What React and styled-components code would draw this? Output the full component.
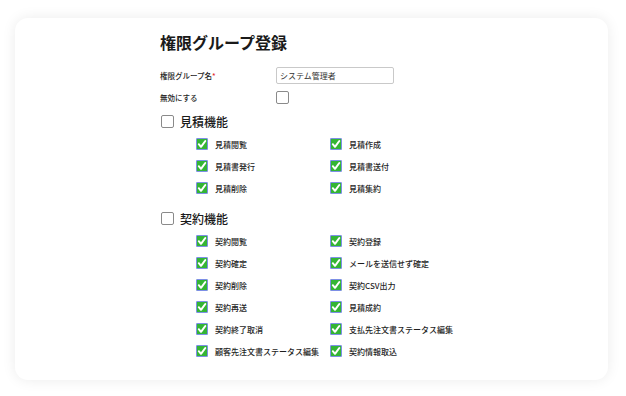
import styled, { createGlobalStyle } from "styled-components";

const GlobalStyle = createGlobalStyle`
  body {
    margin: 0;
    background: #ffffff;
    font-family: "Noto Sans CJK JP", "Noto Sans", sans-serif;
    color: #222;
  }
`;

const estimateItems = ["見積閲覧", "見積作成", "見積書発行", "見積書送付", "見積削除", "見積集約"];

const contractItems = [
  "契約閲覧",
  "契約登録",
  "契約確定",
  "メールを送信せず確定",
  "契約削除",
  "契約CSV出力",
  "契約再送",
  "見積成約",
  "契約終了取消",
  "支払先注文書ステータス編集",
  "顧客先注文書ステータス編集",
  "契約情報取込",
];

const CheckedBox = () => (
  <CheckMark>
    <svg width="10" height="10" viewBox="0 0 10 10">
      <path d="M1.8 5.2 L4 7.8 L8.3 2" fill="none" stroke="#fff" strokeWidth="2" strokeLinecap="round" strokeLinejoin="round" />
    </svg>
  </CheckMark>
);

const Section = ({ title, items }) => (
  <>
    <SectionHeader>
      <EmptyBox />
      <SectionTitle>{title}</SectionTitle>
    </SectionHeader>
    <ItemGrid>
      {items.map((label) => (
        <Item key={label}>
          <CheckedBox />
          <ItemLabel>{label}</ItemLabel>
        </Item>
      ))}
    </ItemGrid>
  </>
);

const App = () => {
  return (
    <>
      <GlobalStyle />
      <Page>
        <Card>
          <Title>権限グループ登録</Title>
          <FormRow>
            <Label>
              権限グループ名<Required>*</Required>
            </Label>
            <TextInput defaultValue="システム管理者" readOnly />
          </FormRow>
          <FormRow>
            <Label>無効にする</Label>
            <EmptyBox />
          </FormRow>
          <Section title="見積機能" items={estimateItems} />
          <SectionSpacer />
          <Section title="契約機能" items={contractItems} />
        </Card>
      </Page>
    </>
  );
};

export default App;

const Page = styled.div`
  width: 626px;
  height: 396px;
  padding: 18px 18px 0 15px;
  box-sizing: border-box;
`;

const Card = styled.div`
  width: 593px;
  height: 362px;
  box-sizing: border-box;
  background: #fff;
  border-radius: 13px;
  box-shadow: 0 0 14px rgba(0, 0, 0, 0.08);
  padding: 14px 0 0 145px;
  display: flex;
  flex-direction: column;
`;

const Title = styled.h1`
  margin: 0 0 12px;
  font-size: 16px;
  line-height: 20px;
  font-weight: 700;
  color: #1a1a1a;
`;

const FormRow = styled.div`
  display: flex;
  align-items: center;
  height: 22px;
`;

const Label = styled.div`
  width: 116px;
  font-size: 7.5px;
  font-weight: 500;
  color: #1e1e1e;
`;

const Required = styled.span`
  color: #e02a2a;
`;

const TextInput = styled.input`
  width: 118px;
  height: 17px;
  box-sizing: border-box;
  border: 1px solid #c9c9c9;
  border-radius: 2px;
  padding: 0 3px;
  font-family: "Noto Sans CJK JP", "Noto Sans", sans-serif;
  font-size: 8px;
  color: #333;
  outline: none;
`;

const EmptyBox = styled.span`
  display: inline-block;
  width: 13px;
  height: 13px;
  box-sizing: border-box;
  border: 1px solid #8a8a8a;
  border-radius: 2px;
  background: #fff;
`;

const SectionHeader = styled.div`
  display: flex;
  align-items: center;
  gap: 6px;
  height: 20px;
  margin: 3px 0 2px 1px;
`;

const SectionTitle = styled.span`
  font-size: 12px;
  font-weight: 500;
  color: #1a1a1a;
`;

const SectionSpacer = styled.div`
  height: 6px;
`;

const ItemGrid = styled.div`
  display: grid;
  grid-template-columns: 134px auto;
  padding-left: 36px;
`;

const Item = styled.div`
  display: flex;
  align-items: center;
  gap: 7px;
  height: 22px;
`;

const CheckMark = styled.span`
  display: inline-flex;
  align-items: center;
  justify-content: center;
  width: 12px;
  height: 12px;
  box-sizing: border-box;
  border: 1px solid #7d8fe6;
  border-radius: 1px;
  background: #34b534;
`;

const ItemLabel = styled.span`
  font-size: 8px;
  font-weight: 500;
  color: #1e1e1e;
  white-space: nowrap;
`;
